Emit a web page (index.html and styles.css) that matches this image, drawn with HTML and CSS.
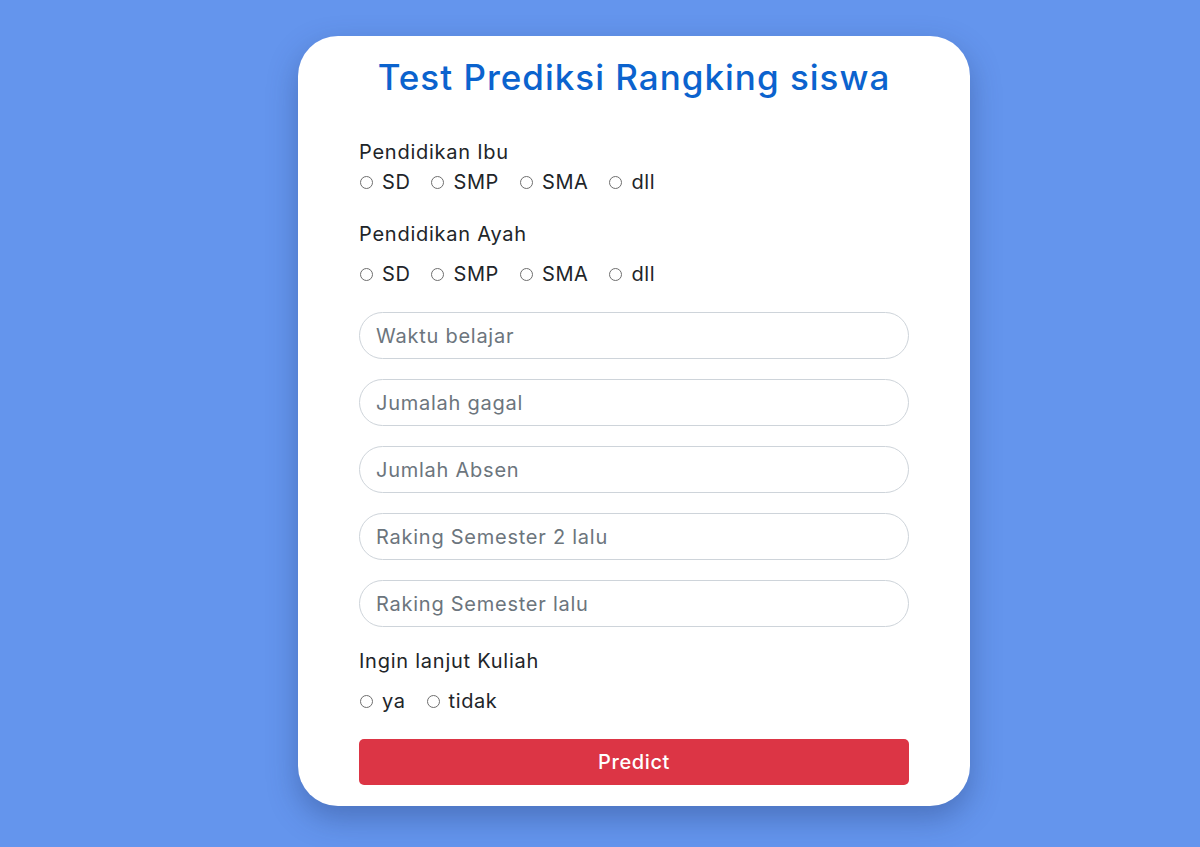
FILE: index.html
```html
<!DOCTYPE html>
<html>
<head>
<meta charset="utf-8">
<link rel="stylesheet" href="styles.css">
</head>
<body>
<div class="card">
  <h1 class="title">Test Prediksi Rangking siswa</h1>
  <form class="form">
    <div class="group-label g1">Pendidikan Ibu</div>
    <div class="radios r1">
      <label class="opt"><input type="radio" name="ibu"><span>SD</span></label>
      <label class="opt"><input type="radio" name="ibu"><span>SMP</span></label>
      <label class="opt"><input type="radio" name="ibu"><span>SMA</span></label>
      <label class="opt"><input type="radio" name="ibu"><span>dll</span></label>
    </div>
    <div class="group-label g2">Pendidikan Ayah</div>
    <div class="radios r2">
      <label class="opt"><input type="radio" name="ayah"><span>SD</span></label>
      <label class="opt"><input type="radio" name="ayah"><span>SMP</span></label>
      <label class="opt"><input type="radio" name="ayah"><span>SMA</span></label>
      <label class="opt"><input type="radio" name="ayah"><span>dll</span></label>
    </div>
    <div class="inputs">
      <input class="field" type="text" placeholder="Waktu belajar">
      <input class="field" type="text" placeholder="Jumalah gagal">
      <input class="field" type="text" placeholder="Jumlah Absen">
      <input class="field" type="text" placeholder="Raking Semester 2 lalu">
      <input class="field" type="text" placeholder="Raking Semester lalu">
    </div>
    <div class="group-label g3">Ingin lanjut Kuliah</div>
    <div class="radios r2">
      <label class="opt"><input type="radio" name="kuliah"><span>ya</span></label>
      <label class="opt"><input type="radio" name="kuliah"><span>tidak</span></label>
    </div>
    <button class="btn" type="button">Predict</button>
  </form>
</div>
</body>
</html>
```

FILE: styles.css
```css
html, body {
  margin: 0;
  padding: 0;
}
body {
  background: #6495ed;
  height: 847px;
  font-family: "Inter", "Open Sans", sans-serif;
  color: #212529;
  overflow: hidden;
}
.card {
  box-sizing: border-box;
  width: 672px;
  height: 770px;
  margin: 36px 0 0 298px;
  background: #fff;
  border-radius: 40px;
  padding: 16px 61px 0;
  box-shadow: 0 12px 30px rgba(30, 50, 100, 0.35);
}
.title {
  margin: 0;
  text-align: center;
  font-size: 35px;
  line-height: 50px;
  font-weight: 500;
  color: #0b63ce;
  letter-spacing: 1px;
}
.form {
  display: flex;
  flex-direction: column;
}
.group-label {
  font-size: 20px;
  line-height: 24px;
  letter-spacing: 0.75px;
}
.g1 { margin-top: 38px; }
.g2 { margin-top: 25px; }
.g3 { margin-top: 22px; }
.radios {
  display: flex;
  gap: 20px;
  height: 30px;
  align-items: center;
}
.r1 { margin-top: 3px; }
.r2 { margin-top: 13px; }
.opt {
  display: flex;
  align-items: center;
  gap: 9px;
  font-size: 20px;
  line-height: 30px;
  letter-spacing: 0.6px;
}
.opt input {
  appearance: none;
  -webkit-appearance: none;
  margin: 0 0 0 1px;
  width: 13px;
  height: 13px;
  border: 1px solid #6e6e6e;
  border-radius: 50%;
  box-sizing: border-box;
  background: #fff;
}
.inputs {
  display: flex;
  flex-direction: column;
  gap: 20px;
  margin-top: 23px;
}
.field {
  box-sizing: border-box;
  height: 47px;
  width: 100%;
  border: 1px solid #ced4da;
  border-radius: 24px;
  padding: 0 16px;
  font-family: inherit;
  font-size: 20px;
  letter-spacing: 0.75px;
  color: #212529;
  background: #fff;
  outline: none;
}
.field::placeholder {
  color: #6c757d;
}
.btn {
  margin-top: 23px;
  height: 46px;
  width: 100%;
  border: none;
  border-radius: 5px;
  background: #dc3545;
  color: #fff;
  font-family: inherit;
  font-size: 20px;
  font-weight: 500;
  letter-spacing: 0.6px;
  cursor: pointer;
}
```
